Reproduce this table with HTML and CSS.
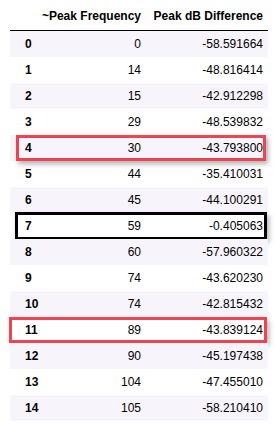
FILE: index.html
```html
<!DOCTYPE html>
<html>
<head>
<meta charset="utf-8">
<link rel="stylesheet" href="styles.css">
</head>
<body>
<div class="df">
  <div class="row head">
    <div class="c idx"></div>
    <div class="c num">~Peak Frequency</div>
    <div class="c num">Peak dB Difference</div>
  </div>
  <div class="body">
    <div class="row"><div class="c idx">0</div><div class="c num">0</div><div class="c num">-58.591664</div></div>
    <div class="row"><div class="c idx">1</div><div class="c num">14</div><div class="c num">-48.816414</div></div>
    <div class="row"><div class="c idx">2</div><div class="c num">15</div><div class="c num">-42.912298</div></div>
    <div class="row"><div class="c idx">3</div><div class="c num">29</div><div class="c num">-48.539832</div></div>
    <div class="row mark red-a"><div class="c idx">4</div><div class="c num">30</div><div class="c num">-43.793800</div></div>
    <div class="row"><div class="c idx">5</div><div class="c num">44</div><div class="c num">-35.410031</div></div>
    <div class="row"><div class="c idx">6</div><div class="c num">45</div><div class="c num">-44.100291</div></div>
    <div class="row mark black"><div class="c idx">7</div><div class="c num">59</div><div class="c num">-0.405063</div></div>
    <div class="row"><div class="c idx">8</div><div class="c num">60</div><div class="c num">-57.960322</div></div>
    <div class="row"><div class="c idx">9</div><div class="c num">74</div><div class="c num">-43.620230</div></div>
    <div class="row"><div class="c idx">10</div><div class="c num">74</div><div class="c num">-42.815432</div></div>
    <div class="row mark red-b"><div class="c idx">11</div><div class="c num">89</div><div class="c num">-43.839124</div></div>
    <div class="row"><div class="c idx">12</div><div class="c num">90</div><div class="c num">-45.197438</div></div>
    <div class="row"><div class="c idx">13</div><div class="c num">104</div><div class="c num">-47.455010</div></div>
    <div class="row"><div class="c idx">14</div><div class="c num">105</div><div class="c num">-58.210410</div></div>
  </div>
</div>
</body>
</html>
```
FILE: styles.css
```css
html, body {
  margin: 0;
  padding: 0;
  background: #ffffff;
}
body {
  font-family: "Liberation Sans", Arial, sans-serif;
  font-size: 12px;
  color: #000;
}
.df {
  margin-left: 10px;
  width: 258px;
}
.row {
  display: grid;
  grid-template-columns: 30px 106px 122px;
  height: 26px;
  align-items: center;
  position: relative;
}
.head {
  height: 30px;
  align-items: end;
  border-bottom: 1px solid #000;
  font-weight: bold;
}
.head .c {
  padding-bottom: 7px;
}
.c {
  padding-right: 5px;
  white-space: nowrap;
}
.idx {
  padding-left: 15px;
  font-weight: bold;
}
.num {
  text-align: right;
}
.body .row:nth-child(odd) {
  background: #f8f4fc;
}
.mark::after {
  content: "";
  position: absolute;
  top: 0;
  bottom: 0;
  border: 3px solid;
  box-shadow: 2px 3px 5px rgba(0, 0, 0, 0.3);
  pointer-events: none;
}
.red-a::after {
  left: 6px;
  right: 2px;
  border-color: #ec4452;
}
.black::after {
  top: -1px;
  bottom: -1px;
  left: 5px;
  right: 1px;
  border-color: #000;
}
.red-b::after {
  left: -1px;
  right: 1px;
  border-color: #ec4452;
}
```
